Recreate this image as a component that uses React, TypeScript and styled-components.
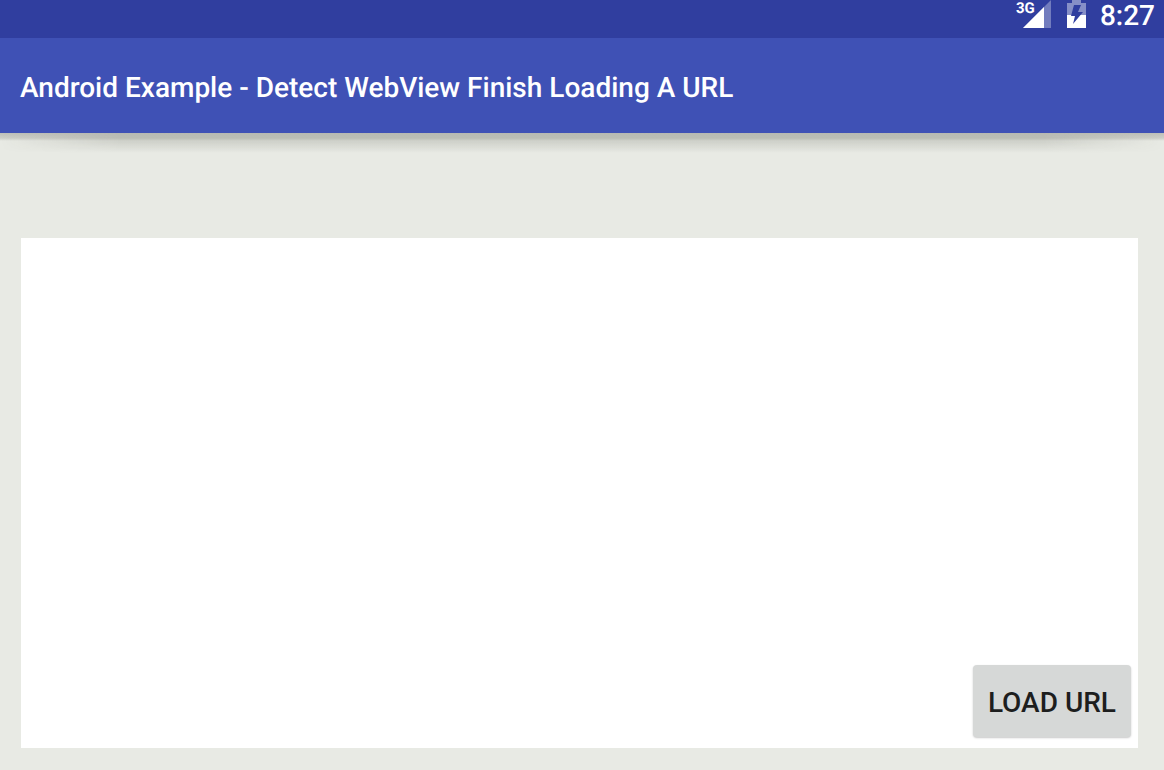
import React, { useState } from "react";
import styled, { createGlobalStyle } from "styled-components";

const GlobalStyle = createGlobalStyle`
  * {
    box-sizing: border-box;
  }
  body {
    margin: 0;
    font-family: Roboto, "Liberation Sans", sans-serif;
    font-weight: 500;
    text-rendering: geometricPrecision;
  }
`;

const Screen = styled.div`
  display: flex;
  flex-direction: column;
  min-height: 100vh;
  background: #e8eae4;
`;

const StatusBar = styled.div`
  display: flex;
  justify-content: flex-end;
  align-items: flex-start;
  height: 38px;
  padding-right: 9px;
  background: #303e9f;
  color: #fff;
`;

const SignalIcon = styled.svg`
  display: block;
  margin-right: 16px;
  overflow: visible;
  font-size: 15px;
  font-weight: 700;
`;

const BatteryIcon = styled.svg`
  display: block;
  margin-right: 14px;
`;

const Clock = styled.time`
  font-size: 28px;
  line-height: 32px;
`;

const AppBar = styled.header`
  position: relative;
  display: flex;
  align-items: center;
  height: 95px;
  padding: 4px 21px 0 20px;
  background: #3f51b5;
  color: #fff;
`;

const Shade = styled.div`
  position: absolute;
  top: 100%;
  left: 0;
  right: 0;
  height: 20px;
  background: linear-gradient(rgba(40, 42, 30, 0.22), rgba(40, 42, 30, 0.14) 5px, transparent 8px);

  &::after {
    content: "";
    position: absolute;
    inset: 0;
    background: linear-gradient(
      rgba(40, 42, 30, 0.04),
      rgba(40, 42, 30, 0.12) 6px,
      rgba(40, 42, 30, 0.12) 9px,
      transparent
    );
    mask-image: linear-gradient(90deg, transparent, #000 120px, #000 calc(100% - 120px), transparent);
  }
`;

const Title = styled.h1`
  margin: 0;
  font-size: 28px;
  line-height: 34px;
  font-weight: 500;
`;

const Content = styled.main`
  display: flex;
  flex: 1;
  padding: 105px 26px 22px 21px;
`;

const WebView = styled.section`
  display: flex;
  flex: 1;
  align-items: flex-end;
  justify-content: flex-end;
  padding: 8px 7px 11px;
  background: #fff;
`;

const LoadButton = styled.button`
  height: 72px;
  padding: 4px 15px 0;
  border: 0;
  border-radius: 4px;
  background: #d6d8d7;
  box-shadow: 0 1px 2px rgba(0, 0, 0, 0.22);
  color: #1d1e1e;
  font: inherit;
  font-size: 28px;
  line-height: 34px;
  cursor: pointer;
`;

export default function App() {
  const [, setRequested] = useState(false);

  return (
    <>
      <GlobalStyle />
      <Screen>
        <StatusBar>
          <SignalIcon width="35" height="30" viewBox="0 0 35 30" role="img" aria-label="3G signal">
            <path d="M7 28L35 0V28Z" fill="#fff" fillOpacity="0.32" />
            <path d="M7 28L28 7V28Z" fill="#fff" />
            <text x="0" y="13" fill="#fff">3G</text>
          </SignalIcon>
          <BatteryIcon width="19" height="30" viewBox="0 0 19 30" role="img" aria-label="Battery charging">
            <path d="M5 0H14V3H19V15H0V3H5Z" fill="#fff" fillOpacity="0.42" />
            <path d="M0 15H19V28H0Z" fill="#fff" />
            <path d="M7 5H14L11 12H16L6 24L8 16H4Z" fill="#303e9f" />
          </BatteryIcon>
          <Clock>8:27</Clock>
        </StatusBar>
        <AppBar>
          <Title>Android Example - Detect WebView Finish Loading A URL</Title>
          <Shade />
        </AppBar>
        <Content>
          <WebView aria-label="Web page">
            <LoadButton type="button" onClick={() => setRequested(true)}>
              LOAD URL
            </LoadButton>
          </WebView>
        </Content>
      </Screen>
    </>
  );
}
